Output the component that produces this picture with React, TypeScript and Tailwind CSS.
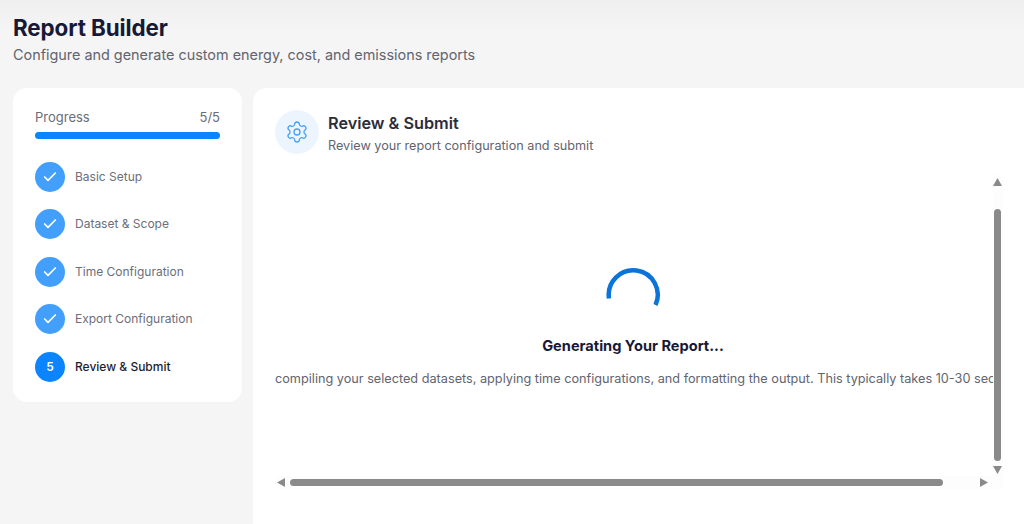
import { Check, Settings } from "lucide-react";

const steps = ["Basic Setup", "Dataset & Scope", "Time Configuration", "Export Configuration"];

function Arrow({ dir }: { dir: "up" | "down" | "left" | "right" }) {
  const points = {
    up: "4.5,0 9,8 0,8",
    down: "0,0 9,0 4.5,8",
    left: "8,0 8,9 0,4.5",
    right: "0,0 8,4.5 0,9",
  }[dir];
  const vertical = dir === "up" || dir === "down";
  return (
    <svg width={vertical ? 9 : 8} height={vertical ? 8 : 9} className="block shrink-0">
      <polygon points={points} fill="#8a8a8a" />
    </svg>
  );
}

export default function App() {
  return (
    <div className="h-[524px] w-[1024px] overflow-hidden bg-gradient-to-b from-[#efefef] to-[#f5f5f5] to-[6%] font-['Inter','Noto_Sans',sans-serif]">
      <div className="pl-[13px] pt-[14px]">
        <h1 className="text-[22.4px] font-bold leading-[28px] tracking-[-0.1px] text-[#171a36]">Report Builder</h1>
        <p className="mt-[1px] text-[14.4px] leading-[24px] text-[#62646f]">
          Configure and generate custom energy, cost, and emissions reports
        </p>
      </div>

      <div className="mt-[21px] flex gap-[11px] pl-[13px]">
        <aside className="h-[314px] w-[229px] shrink-0 rounded-[14px] bg-white px-[22px] pt-[20px]">
          <div className="flex items-center justify-between text-[13px] leading-[18px] text-[#6a6c76]">
            <span>Progress</span>
            <span>5/5</span>
          </div>
          <div className="mt-[6px] h-[7px] rounded-full bg-[#0a84ff]" />
          <div className="mt-[23px] flex flex-col gap-[18px]">
            {steps.map((step) => (
              <div key={step} className="flex h-[29.5px] items-center gap-[10px]">
                <span className="flex h-[30px] w-[30px] shrink-0 items-center justify-center rounded-full bg-[#429ffc]">
                  <Check size={16} strokeWidth={2.5} className="text-white" />
                </span>
                <span className="text-[12px] text-[#6c6e7a]">{step}</span>
              </div>
            ))}
            <div className="flex h-[29.5px] items-center gap-[10px]">
              <span className="flex h-[30px] w-[30px] shrink-0 items-center justify-center rounded-full bg-[#0a84ff] text-[12px] font-semibold text-white">
                5
              </span>
              <span className="text-[12px] font-medium text-[#1c1e33]">Review & Submit</span>
            </div>
          </div>
        </aside>

        <main className="h-[450px] flex-1 rounded-tl-[14px] bg-white pl-[22px] pt-[22px]">
          <div className="flex items-start gap-[9px]">
            <span className="flex h-[44px] w-[44px] items-center justify-center rounded-full bg-[#ecf5fe]">
              <Settings size={24} strokeWidth={1.3} className="text-[#4aa0f5]" />
            </span>
            <div className="mt-[2px]">
              <h2 className="text-[16.25px] font-semibold leading-[22px] text-[#2b2d3a]">Review & Submit</h2>
              <p className="mt-[2px] text-[12.65px] leading-[20px] text-[#62646f]">Review your report configuration and submit</p>
            </div>
          </div>

          <div className="mt-[19px] grid w-[728px] grid-cols-[718px_10px] grid-rows-[301px_13px]">
            <div className="flex min-w-0 flex-col items-center overflow-hidden pr-[2px] pt-[92px]">
              <svg width="56" height="56" viewBox="0 0 56 56" className="block">
                <path d="M4 31.5 A24.5 24.5 0 1 1 50.5 38" fill="none" stroke="#0a74d8" strokeWidth="4.5" />
              </svg>
              <h3 className="mt-[13px] text-[14.6px] font-bold leading-[20px] text-[#171a36]">Generating Your Report...</h3>
              <p className="mt-[14px] self-start whitespace-nowrap text-[12.7px] leading-[18px] text-[#62646f]">
                compiling your selected datasets, applying time configurations, and formatting the output. This typically takes 10-30 seconds.
              </p>
            </div>
            <div className="flex flex-col items-center bg-[#fdfdfd] pr-[1px] pt-[3px]">
              <Arrow dir="up" />
              <div className="mt-[23px] h-[252px] w-[7px] shrink-0 rounded-full bg-[#8a8a8a]" />
              <div className="mt-[5px]">
                <Arrow dir="down" />
              </div>
            </div>
            <div className="flex items-center bg-[#fdfdfd] pl-[2px] pr-[5px]">
              <Arrow dir="left" />
              <div className="ml-[5px] h-[7px] w-[653px] rounded-full bg-[#8a8a8a]" />
              <div className="ml-auto">
                <Arrow dir="right" />
              </div>
            </div>
            <div className="bg-[#fdfdfd]" />
          </div>
        </main>
      </div>
    </div>
  );
}
